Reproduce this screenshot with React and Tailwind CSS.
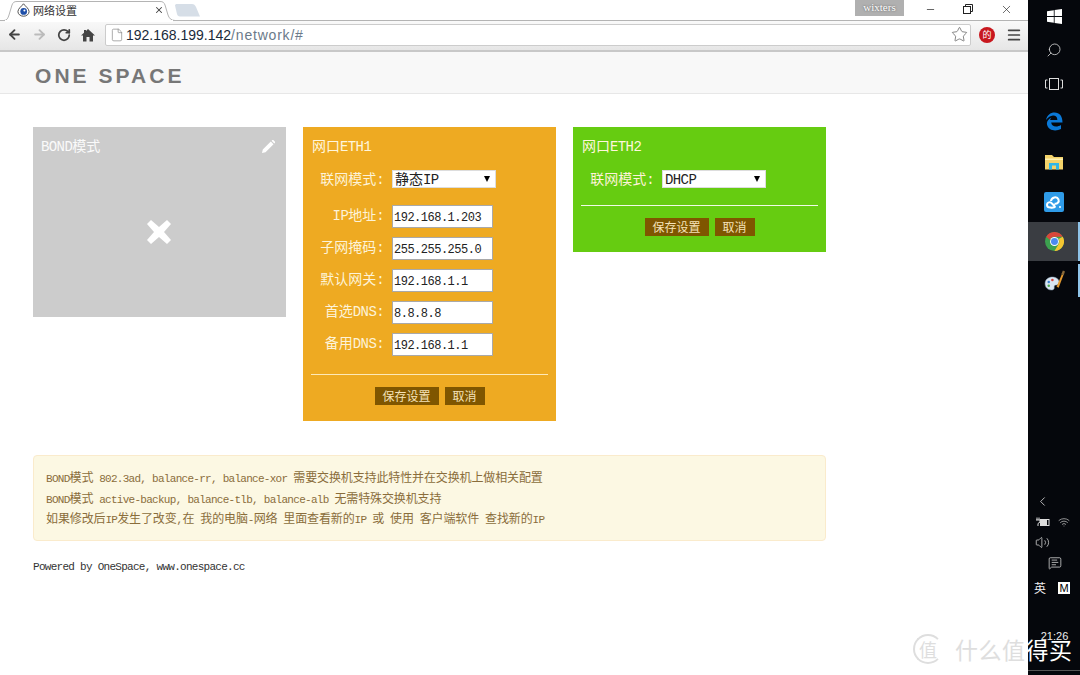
import React from 'react';
import {
  ArrowLeft, ArrowRight, RotateCw, File, Star, Menu, Minus, X, Search, ChevronLeft, Wifi, Volume2, MessageSquareText,
} from 'lucide-react';

const cjk = '"Noto Sans CJK SC", "Liberation Sans", sans-serif';

// latin runs get the narrow mono face, everything else stays on the CJK face
const Mix = ({ text, big = false }) =>
  text.split(/([\u0000-\u00ff]+)/).filter(Boolean).map((part, i) =>
    /^[\u0000-\u00ff]+$/.test(part) ? (
      <span
        key={i}
        className={big
          ? "font-['Liberation_Mono',monospace] text-[14px] tracking-[-0.6px] whitespace-pre"
          : "font-['Liberation_Mono',monospace] text-[11px] tracking-[-0.72px] whitespace-pre"}
      >
        {part}
      </span>
    ) : (
      <span key={i} className={big ? 'text-[14px]' : 'text-[12px] tracking-[-0.12px]'}>{part}</span>
    )
  );

const Field = ({ label, value }) => (
  <div className="flex items-center gap-[7px] h-[23px]">
    <label className="w-[74px] pb-[6px] pr-px text-right text-[#fdf3d8] leading-none"><Mix text={label} big /></label>
    <input
      readOnly
      value={value}
      className="w-[101px] h-[23px] bg-white border border-[#a9a9a9] pl-px pt-[3px] text-[12px] tracking-[-0.5px] text-[#222] font-['Liberation_Mono',monospace] outline-none"
    />
  </div>
);

const ModeSelect = ({ value }) => (
  <div className="flex items-center gap-[7px] h-[18px]">
    <label className="w-[74px] pb-[2px] pr-px text-right text-[#fdf3d8] leading-none"><Mix text="联网模式:" big /></label>
    <div className="w-[104px] h-[18px] bg-white border border-[#ddd] pl-[2px] pr-[5px] flex items-center justify-between text-[#222] leading-none">
      <span className="pb-[2px]"><Mix text={value} big /></span>
      <span className="w-0 h-0 border-x-[3.5px] border-x-transparent border-t-[6px] border-t-black" />
    </div>
  </div>
);

const Actions = () => (
  <div className="flex justify-center gap-[6px] mt-[12px]">
    <button className="w-[64px] h-[18px] bg-[#7f5600] text-[#f5e2b8] text-[12px] leading-none">保存设置</button>
    <button className="w-[40px] h-[18px] bg-[#7f5600] text-[#f5e2b8] text-[12px] leading-none">取消</button>
  </div>
);

const PanelTitle = ({ text }) => (
  <div className="h-[20px] pl-px pb-[2px] flex items-center text-[#fff6dc] leading-none"><span><Mix text={text} big /></span></div>
);

const TabShape = () => (
  <svg width="200" height="22" viewBox="0 0 200 22" className="absolute left-0 top-0">
    <path d="M0 20.5H4C7 20.5 8 18 9 15L12 5C13 2.5 14 1.5 17 1.5H160C163 1.5 164 2.5 165 5L168 15C169 18 171 20.5 175 20.5H200" fill="#fff" stroke="#b4b4b4" />
    <rect x="5" y="20" width="168" height="2" fill="#fff" />
    <path d="M175 5.5C175 4.5 176 4 177 4H192C194 4 195 5 196 7L200 16.5H180C178 16.5 177.500 15.500 177 14Z" fill="#d6dee7" />
  </svg>
);

const Favicon = () => (
  <svg width="13" height="14" viewBox="0 0 14 15">
    <path d="M7 .8C9 3.500 13 6 13 9.200A6 5 0 0 1 1 9.200C1 6 5 3.500 7 .8Z" fill="#fff" stroke="#444" />
    <circle cx="7.200" cy="9" r="3.600" fill="#1f4fa8" />
    <circle cx="8" cy="8" r="1.100" fill="#fff" />
  </svg>
);

const HomeIcon = () => (
  <svg width="14" height="14" viewBox="0 0 14 14" fill="#444">
    <path d="M7 1L14 7.500H12V13.500H8.500V9H5.500V13.500H2V7.500H0L3 4.700V2H5V2.900Z" />
  </svg>
);

const WinLogo = () => (
  <svg width="15" height="15" viewBox="0 0 15 15" fill="#fff">
    <path d="M0 2.200L6.800 1.200V7.100H0ZM7.600 1.100L15 0V7.100H7.600ZM0 7.900H6.800V13.800L0 12.800ZM7.600 7.900H15V15L7.600 13.900Z" />
  </svg>
);

const TaskView = () => (
  <svg width="18" height="12" viewBox="0 0 18 12" fill="none" stroke="#ddd">
    <rect x="4.500" y=".5" width="9" height="11" />
    <path d="M2.500 2H.5V10H2.500M15.500 2H17.500V10H15.500" />
  </svg>
);

const EdgeLogo = () => (
  <svg width="18" height="19" viewBox="0 0 18 19">
    <path d="M1 8C2 3 5.500.5 9.500.5C14.500.5 17.500 4 17.500 10.500H6.200C6.500 15 12 15.500 16 13V17C11 19.500 3.500 19 2 12.500C1.500 10 3 7 6.500 5.500C5.500 6.500 5.200 7.500 5.200 8H12.300C12.500 5 10.500 3.500 8 3.600C5.500 3.800 3 5.500 1 8Z" fill="#0a78d7" />
  </svg>
);

const FolderLogo = () => (
  <svg width="18" height="16" viewBox="0 0 18 16">
    <path d="M0 1H7L9 3H18V15.500H0Z" fill="#f3d26a" />
    <path d="M0 4.500H18V6H0Z" fill="#fff1b0" />
    <path d="M4 9H14V15.500H11V11.500H7V15.500H4Z" fill="#2fb6e8" />
  </svg>
);

const CloudLogo = () => (
  <svg width="20" height="20" viewBox="0 0 20 20">
    <rect width="20" height="20" rx="2" fill="#2f9be8" />
    <path d="M3 13C3 10 6.500 9.500 8 11.500L10.500 14C12 15 9 16 6.500 15.500C4.500 15.500 3 15 3 13ZM7 9C7.500 5 13 4 14.500 7.500C15.500 10 13 12.500 10.500 11.500" fill="none" stroke="#fff" strokeWidth="2" />
    <circle cx="16" cy="15" r="1" fill="#fff" />
  </svg>
);

const ChromeLogo = () => (
  <svg width="19" height="19" viewBox="0 0 18 18">
    <circle cx="9" cy="9" r="9" fill="#3ca14f" />
    <path d="M1.200 4.500A9 9 0 0 1 16.800 4.500H9A4.500 4.500 0 0 0 4.800 7.500Z" fill="#d9473b" />
    <path d="M16.800 4.500A9 9 0 0 1 9 18L12.900 11.300A4.500 4.500 0 0 0 12.900 6.700Z" fill="#f4c531" />
    <circle cx="9" cy="9" r="4.200" fill="#fff" />
    <circle cx="9" cy="9" r="3.300" fill="#4a8af0" />
  </svg>
);

const PaintLogo = () => (
  <svg width="21" height="22" viewBox="0 0 20 21">
    <path d="M1 13C1 8 6 6 10 7C14 8 15 11 14 13C13 15 11 14 10 15C9 16 11 18 8 19C4 19.500 1 17 1 13Z" fill="#d9e6f2" stroke="#8fa6ba" strokeWidth=".5" />
    <circle cx="4.500" cy="11.500" r="1.200" fill="#3a7fd0" />
    <circle cx="8" cy="9.500" r="1.200" fill="#d8443a" />
    <circle cx="4.500" cy="15" r="1.200" fill="#4aa84a" />
    <path d="M12 16L17 4L18.500 4.700L14 17Z" fill="#e59a2e" />
    <path d="M16.500 4L18 .5L20 1.500L18.800 5Z" fill="#8a6a3a" />
  </svg>
);

const Battery = () => (
  <svg width="14" height="10" viewBox="0 0 14 10" fill="none" stroke="#ddd">
    <rect x="4.500" y="2.500" width="8.500" height="6" />
    <rect x="5" y="3" width="6" height="5" fill="#ddd" stroke="none" />
    <path d="M1 .5V3M3 .5V3M0 3H4V5L2 6.500V9" />
  </svg>
);

const App = () => (
  <div className="relative flex w-[1080px] h-[675px] overflow-hidden bg-white" style={{ fontFamily: cjk }}>
    <div className="w-[1028px] flex flex-col">
      {/* Tab strip */}
      <div className="relative h-[21px] flex items-center border-b border-[#b4b4b4]">
        <TabShape />
        <div className="relative w-[175px] flex items-center pl-[17px] pr-[11px] gap-[3px] text-[11px] text-[#333]">
          <Favicon />
          <span className="flex-1 leading-none">网络设置</span>
          <X size={10} strokeWidth={2.5} color="#444" />
        </div>
        <div className="relative ml-auto h-[21px] flex items-start">
          <div className="w-[49px] h-[16px] bg-[#b0b0b0] text-white text-[11px] leading-[15px] text-center font-['Liberation_Serif',serif] [text-shadow:0_0_2px_#555]">wixters</div>
          <div className="w-[124px] h-[21px] flex items-center justify-around pl-[8px] pr-[2px] pb-[2px]">
            <Minus size={11} strokeWidth={1.5} color="#222" />
            <svg width="10" height="10" viewBox="0 0 10 10" fill="none" stroke="#222"><rect x=".5" y="2.500" width="7" height="7" /><path d="M2.500 2.500V.5H9.500V7.500H7.500" /></svg>
            <X size={13} strokeWidth={1.2} color="#222" />
          </div>
        </div>
      </div>

      {/* Toolbar */}
      <div className="h-[31px] flex items-center bg-linear-to-b from-[#f9f9f9] to-[#e6e6e6] border-b-2 border-[#c8c8c8] pb-[2px]">
        <div className="w-[105px] flex items-center pl-[7px] gap-[10px]">
          <ArrowLeft size={15} strokeWidth={3} color="#444" />
          <ArrowRight size={15} strokeWidth={3} color="#bbb" />
          <RotateCw size={14} strokeWidth={3} color="#444" />
          <HomeIcon />
        </div>
        <div className="w-[866px] h-[22px] bg-white border border-[#ccc] rounded-[2px] flex items-center pl-[4px] pr-[2px]">
          <File size={14} strokeWidth={1.2} color="#888" />
          <span className="ml-[2px] text-[14px] text-[#1a2a3a] font-['Liberation_Sans',sans-serif] leading-none">192.168.199.142<span className="text-[#6b7a8a] tracking-[0.8px]">/network/#</span></span>
          <Star size={17} strokeWidth={1} color="#555" className="ml-auto" />
        </div>
        <div className="flex-1 flex items-center pl-[8px] gap-[11px]">
          <div className="w-[16px] h-[16px] rounded-full bg-[#c8171e] text-white text-[9px] leading-[16px] text-center">的</div>
          <Menu size={16} strokeWidth={2.6} color="#444" />
        </div>
      </div>

      {/* Page header */}
      <div className="h-[42px] bg-[#f8f8f8] border-b border-[#e7e7e7] flex items-center pl-[35px] pt-[6px]">
        <span className="text-[20px] font-bold tracking-[2.9px] text-[#777] leading-none font-['Liberation_Sans',sans-serif] [transform:scaleX(1.05)] origin-left">ONE SPACE</span>
      </div>

      {/* Cards */}
      <div className="pt-[33px] pl-[33px] w-[826px]">
        <div className="flex items-start gap-[17px]">
          <div className="w-[253px] h-[190px] bg-[#cccccc] flex flex-col pt-[9px] px-[8px]">
            <div className="flex items-center justify-between h-[20px] pr-[3px]">
              <span className="text-[#fafafa] leading-none pb-[2px]"><Mix text="BOND模式" big /></span>
              <svg width="13" height="13" viewBox="0 0 13 13" fill="#fff"><path d="M0 13L.8 9.500L8.800 1.500L11.500 4.200L3.500 12.200ZM9.600.7L10.300 0C10.700-.2 11-.2 11.300 0L13 1.700C13.200 2 13.200 2.300 13 2.700L12.300 3.400Z" /></svg>
            </div>
            <div className="flex-1 flex items-center justify-center pb-[9px] pr-[1px]">
              <svg width="24" height="24" viewBox="0 0 24 24" fill="#fff"><path d="M4 0L12 7L20 0L24 4L17 12L24 20L20 24L12 17L4 24L0 20L7 12L0 4Z" /></svg>
            </div>
          </div>

          <div className="w-[253px] bg-[#eeaa22] pt-[9px] px-[8px] pb-[16px]">
            <PanelTitle text="网口ETH1" />
            <div className="mt-[14px]"><ModeSelect value="静态IP" /></div>
            <div className="mt-[17px] flex flex-col gap-[9px]">
              <Field label="IP地址:" value="192.168.1.203" />
              <Field label="子网掩码:" value="255.255.255.0" />
              <Field label="默认网关:" value="192.168.1.1" />
              <Field label="首选DNS:" value="8.8.8.8" />
              <Field label="备用DNS:" value="192.168.1.1" />
            </div>
            <div className="mt-[18px] h-px bg-[#fde9b8]" />
            <Actions />
          </div>

          <div className="w-[253px] bg-[#66cc11] pt-[9px] px-[8px] pb-[16px]">
            <PanelTitle text="网口ETH2" />
            <div className="mt-[14px]"><ModeSelect value="DHCP" /></div>
            <div className="mt-[17px] h-px bg-[#f0fbe6]" />
            <Actions />
          </div>
        </div>

        {/* Notice */}
        <div className="mt-[34px] h-[86px] bg-[#fcf8e3] border border-[#faebcc] rounded-[4px] pl-[12px] pt-[11px] text-[#8a6d3b] leading-none">
          <p className="h-[21px]"><Mix text="BOND模式 802.3ad, balance-rr, balance-xor 需要交换机支持此特性并在交换机上做相关配置" /></p>
          <p className="h-[20px]"><Mix text="BOND模式 active-backup, balance-tlb, balance-alb 无需特殊交换机支持" /></p>
          <p className="h-[21px]"><Mix text="如果修改后IP发生了改变,在 我的电脑-网络 里面查看新的IP 或 使用 客户端软件 查找新的IP" /></p>
        </div>

        <div className="mt-[14px] h-[18px] leading-none text-[#333]"><Mix text="Powered by OneSpace, www.onespace.cc" /></div>
      </div>
    </div>

    {/* Vertical taskbar */}
    <div className="w-[52px] bg-[#05070c] flex flex-col items-stretch">
      <div className="h-[33px] flex items-center justify-center"><WinLogo /></div>
      <div className="h-[34px] flex items-center justify-center"><Search size={16} strokeWidth={1.2} color="#ddd" className="-scale-x-100" /></div>
      <div className="h-[34px] flex items-center justify-center"><TaskView /></div>
      <div className="h-[41px] flex items-center justify-center"><EdgeLogo /></div>
      <div className="h-[40px] flex items-center justify-center"><FolderLogo /></div>
      <div className="h-[40px] flex items-center justify-center"><CloudLogo /></div>
      <div className="h-[39px] flex items-center justify-center bg-[#3a3d42] border-r-2 border-[#8fc3e8] pl-[2px]"><ChromeLogo /></div>
      <div className="h-[39px] flex items-center">
        <div className="flex-1 flex justify-center pl-[2px]"><PaintLogo /></div>
        <div className="w-[2px] h-[33px] bg-[#8fc3e8]" />
      </div>

      <div className="flex-1" />

      <div className="h-[20px] pl-[7px] flex items-center"><ChevronLeft size={15} strokeWidth={1.3} color="#ddd" /></div>
      <div className="h-[21px] pl-[8px] pr-[10px] flex items-center justify-between"><Battery /><Wifi size={12} strokeWidth={1.5} color="#bbb" /></div>
      <div className="h-[20px] pl-[7px] flex items-center"><Volume2 size={15} strokeWidth={1.2} color="#ddd" /></div>
      <div className="h-[22px] flex items-center justify-center pl-[2px]"><MessageSquareText size={14} strokeWidth={1.3} color="#ddd" /></div>
      <div className="mt-[4px] h-[20px] pl-[6px] pr-[10px] flex items-center justify-between text-[12px] text-[#eee] leading-none">
        <span>英</span>
        <span className="w-[12px] h-[12px] bg-white text-black text-[11px] leading-[12px] text-center font-['Liberation_Sans',sans-serif]">M</span>
      </div>
      <div className="mt-[30px] h-[16px] text-center text-[11px] text-[#eee] leading-[16px] font-['Liberation_Sans',sans-serif] pl-[1px]">21:26</div>
      <div className="mt-[26px] h-[5px] border-t border-[#555]" />
    </div>

    {/* Watermark */}
    <div className="absolute left-[913px] top-[634px] flex items-center text-[23px] leading-none">
      <span className="w-[30px] h-[30px] rounded-full border-2 border-[#dedede] border-r-transparent text-[#dedede] text-[18px] flex items-center justify-center">值</span>
      <span className="ml-[12px] text-[#dedede] tracking-[0.5px]">什么值</span>
      <span className="text-white tracking-[0.5px]">得买</span>
    </div>
  </div>
);

export default App;
